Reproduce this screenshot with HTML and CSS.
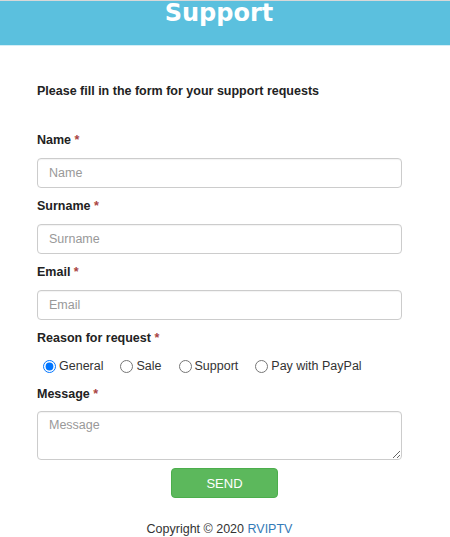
FILE: index.html
```html
<!DOCTYPE html>
<html>
<head>
<meta charset="utf-8">
<link rel="stylesheet" href="styles.css">
</head>
<body>
<header class="banner"><h1 class="banner-title">Support</h1></header>
<main class="content">
  <p class="intro">Please fill in the form for your support requests</p>
  <form class="form">
    <label class="label">Name <span class="req">*</span></label>
    <input class="field" type="text" placeholder="Name">
    <label class="label">Surname <span class="req">*</span></label>
    <input class="field" type="text" placeholder="Surname">
    <label class="label">Email <span class="req">*</span></label>
    <input class="field" type="text" placeholder="Email">
    <label class="label">Reason for request <span class="req">*</span></label>
    <div class="radios">
      <label class="radio"><input type="radio" name="r" checked> General</label>
      <label class="radio"><input type="radio" name="r"> Sale</label>
      <label class="radio"><input type="radio" name="r"> Support</label>
      <label class="radio"><input type="radio" name="r"> Pay with PayPal</label>
    </div>
    <label class="label">Message <span class="req">*</span></label>
    <textarea class="field area" placeholder="Message"></textarea>
    <button class="send" type="button">SEND</button>
  </form>
  <p class="copy">Copyright © 2020 <a class="link" href="#">RVIPTV</a></p>
</main>
</body>
</html>
```
FILE: styles.css
```css
html, body { margin: 0; padding: 0; background: #fff; }
body { font-family: "Liberation Sans", Arial, sans-serif; color: #333; }
.banner {
  height: 44px;
  background: #5bc0de;
  border-top: 1px solid #d8d8d8;
  border-bottom: 1px solid #d4eef6;
}
.banner-title {
  margin: 0;
  padding-right: 12px;
  text-align: center;
  font-family: "DejaVu Sans", Verdana, sans-serif;
  font-weight: bold;
  font-size: 24px;
  line-height: 24px;
  color: #fff;
}
.content { width: 365px; margin-left: 37px; }
.intro {
  margin: 36px 0 0;
  font-size: 12.5px; font-weight: bold; line-height: 18px; color: #222;
}
.form { display: flex; flex-direction: column; gap: 9px; margin-top: 31px; }
.label { font-size: 12.5px; font-weight: bold; line-height: 18px; color: #222; }
.req { color: #a94442; }
.field {
  box-sizing: border-box;
  width: 365px; height: 30px;
  border: 1px solid #ccc; border-radius: 4px;
  padding: 0 11px;
  font-family: "Liberation Sans", Arial, sans-serif;
  font-size: 12.5px; color: #555;
  box-shadow: inset 0 1px 1px rgba(0,0,0,0.05);
}
.field::placeholder { color: #999; }
.area { height: 49px; padding-top: 6px; resize: vertical; margin-top: -1px; }
.radios { display: flex; height: 20px; align-items: center; padding-left: 6px; }
.radio { display: flex; align-items: center; font-size: 12.5px; color: #333; margin-right: 17px; }
.radio input { margin: 0 3px 0 0; width: 13px; height: 13px; }
.send {
  margin: -1px 0 0 134px;
  width: 107px; height: 30px;
  background: #5cb85c; border: 1px solid #4cae4c; border-radius: 4px;
  color: #fff; font-family: "Liberation Sans", Arial, sans-serif; font-size: 13px;
}
.copy { margin: 22px 0 0; text-align: center; font-size: 12.5px; line-height: 18px; }
.link { color: #337ab7; text-decoration: none; }
```
